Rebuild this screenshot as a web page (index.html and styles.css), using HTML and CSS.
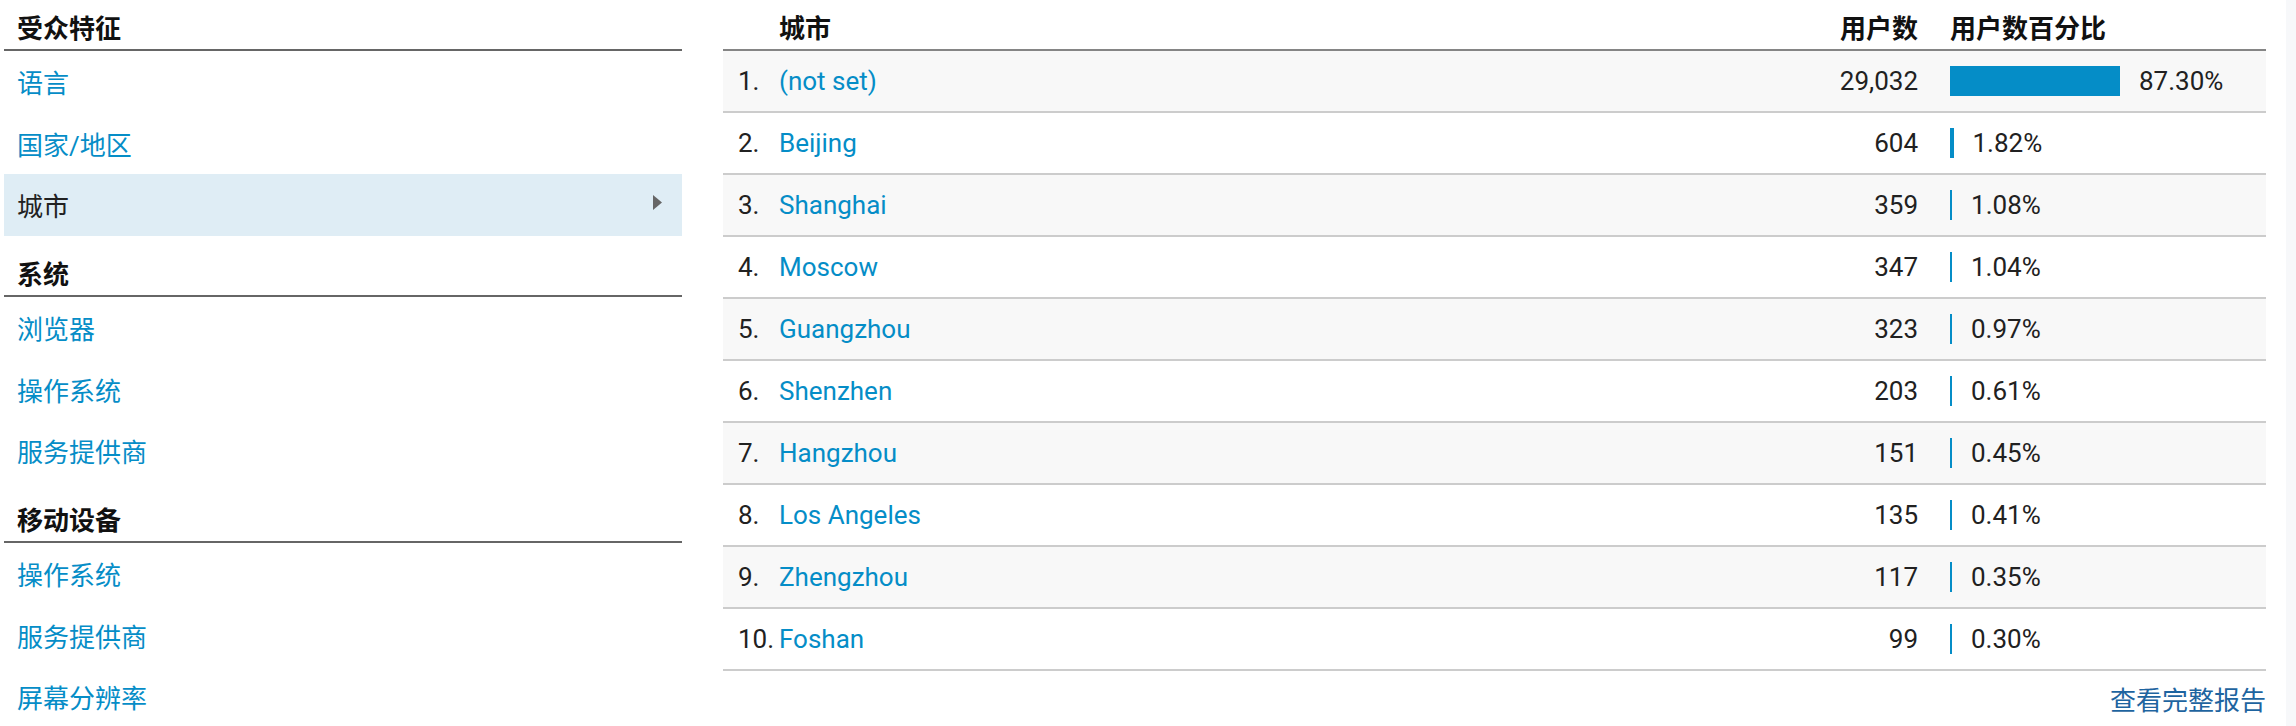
FILE: index.html
```html
<!DOCTYPE html>
<html lang="zh-CN">
<head>
<meta charset="utf-8">
<title>城市</title>
<link rel="stylesheet" href="styles.css">
</head>
<body>
<div class="page">
  <nav class="side">
    <div class="group">
      <div class="group-title">受众特征</div>
      <a class="side-item" href="#">语言</a>
      <a class="side-item" href="#">国家/地区</a>
      <div class="side-item active"><span>城市</span><svg class="caret" width="9" height="15" viewBox="0 0 9 15"><polygon points="0,0 9,7.5 0,15" fill="#666"/></svg></div>
    </div>
    <div class="group">
      <div class="group-title">系统</div>
      <a class="side-item" href="#">浏览器</a>
      <a class="side-item" href="#">操作系统</a>
      <a class="side-item" href="#">服务提供商</a>
    </div>
    <div class="group">
      <div class="group-title">移动设备</div>
      <a class="side-item" href="#">操作系统</a>
      <a class="side-item" href="#">服务提供商</a>
      <a class="side-item" href="#">屏幕分辨率</a>
    </div>
  </nav>

  <section class="report">
    <div class="row head">
      <div class="rank"></div>
      <div class="city">城市</div>
      <div class="num">用户数</div>
      <div class="pct-head">用户数百分比</div>
    </div>
    <div class="rows">
      <div class="row"><div class="rank">1.</div><div class="city"><a href="#">(not set)</a></div><div class="num">29,032</div><div class="pct"><span class="bar" style="width:170px"></span><span>87.30%</span></div></div>
      <div class="row"><div class="rank">2.</div><div class="city"><a href="#">Beijing</a></div><div class="num">604</div><div class="pct"><span class="bar" style="width:3.5px"></span><span>1.82%</span></div></div>
      <div class="row"><div class="rank">3.</div><div class="city"><a href="#">Shanghai</a></div><div class="num">359</div><div class="pct"><span class="bar" style="width:2.1px"></span><span>1.08%</span></div></div>
      <div class="row"><div class="rank">4.</div><div class="city"><a href="#">Moscow</a></div><div class="num">347</div><div class="pct"><span class="bar" style="width:2px"></span><span>1.04%</span></div></div>
      <div class="row"><div class="rank">5.</div><div class="city"><a href="#">Guangzhou</a></div><div class="num">323</div><div class="pct"><span class="bar" style="width:1.9px"></span><span>0.97%</span></div></div>
      <div class="row"><div class="rank">6.</div><div class="city"><a href="#">Shenzhen</a></div><div class="num">203</div><div class="pct"><span class="bar" style="width:1.2px"></span><span>0.61%</span></div></div>
      <div class="row"><div class="rank">7.</div><div class="city"><a href="#">Hangzhou</a></div><div class="num">151</div><div class="pct"><span class="bar" style="width:0.9px"></span><span>0.45%</span></div></div>
      <div class="row"><div class="rank">8.</div><div class="city"><a href="#">Los Angeles</a></div><div class="num">135</div><div class="pct"><span class="bar" style="width:0.8px"></span><span>0.41%</span></div></div>
      <div class="row"><div class="rank">9.</div><div class="city"><a href="#">Zhengzhou</a></div><div class="num">117</div><div class="pct"><span class="bar" style="width:0.7px"></span><span>0.35%</span></div></div>
      <div class="row"><div class="rank">10.</div><div class="city"><a href="#">Foshan</a></div><div class="num">99</div><div class="pct"><span class="bar" style="width:0.6px"></span><span>0.30%</span></div></div>
    </div>
    <div class="more"><a href="#">查看完整报告</a></div>
  </section>

  <div class="strip"></div>
</div>
</body>
</html>
```
FILE: styles.css
```css
html, body {
  margin: 0;
  height: 726px;
  overflow: hidden;
  background: #fff;
}

body {
  font-family: Roboto, "Noto Sans CJK SC", sans-serif;
  font-size: 26px;
  color: #212121;
}

a {
  color: #058dc7;
  text-decoration: none;
}

.page {
  display: flex;
  height: 726px;
}

/* ---------- side navigation ---------- */
.side {
  flex: none;
  width: 678px;
  margin-left: 4px;
}

.group-title {
  box-sizing: border-box;
  height: 51px;
  padding: 14px 0 0 13px;
  line-height: 30px;
  font-weight: 700;
  color: #111;
  border-bottom: 2px solid #666;
}

.group + .group .group-title {
  margin-top: 10.5px;
}

.side-item {
  box-sizing: border-box;
  height: 61.5px;
  display: flex;
  align-items: center;
  justify-content: space-between;
  padding: 0 20px 0 13px;
  color: #058dc7;
}

.side-item.active {
  background: #dfedf5;
  color: #212121;
}

.caret {
  display: block;
  margin-top: -5px;
}

/* ---------- report table ---------- */
.report {
  flex: none;
  width: 1543px;
  margin-left: 41px;
}

.row {
  display: grid;
  grid-template-columns: 56px 938px 233px 316px;
  box-sizing: border-box;
  height: 62px;
  align-items: center;
  border-bottom: 2px solid #cccccc;
  line-height: 30px;
}

.rows .row:nth-child(odd) {
  background: #f8f8f8;
}

.row.head {
  height: 51px;
  align-items: start;
  padding-top: 14px;
  font-weight: 700;
  color: #111;
  border-bottom: 2px solid #858585;
}

.rank {
  padding-left: 15px;
}

.num {
  text-align: right;
  padding-right: 32px;
}

.pct {
  display: flex;
  align-items: center;
}

.bar {
  display: block;
  height: 30px;
  min-width: 2px;
  background: #058dc7;
  margin-right: 19px;
}

.more {
  text-align: right;
  margin-top: 10px;
  line-height: 40px;
}

.more a {
  color: #1e64a0;
}

/* ---------- right edge strip ---------- */
.strip {
  flex: none;
  width: 10px;
  margin-left: 20px;
  background: #f7f8fa;
}
```
